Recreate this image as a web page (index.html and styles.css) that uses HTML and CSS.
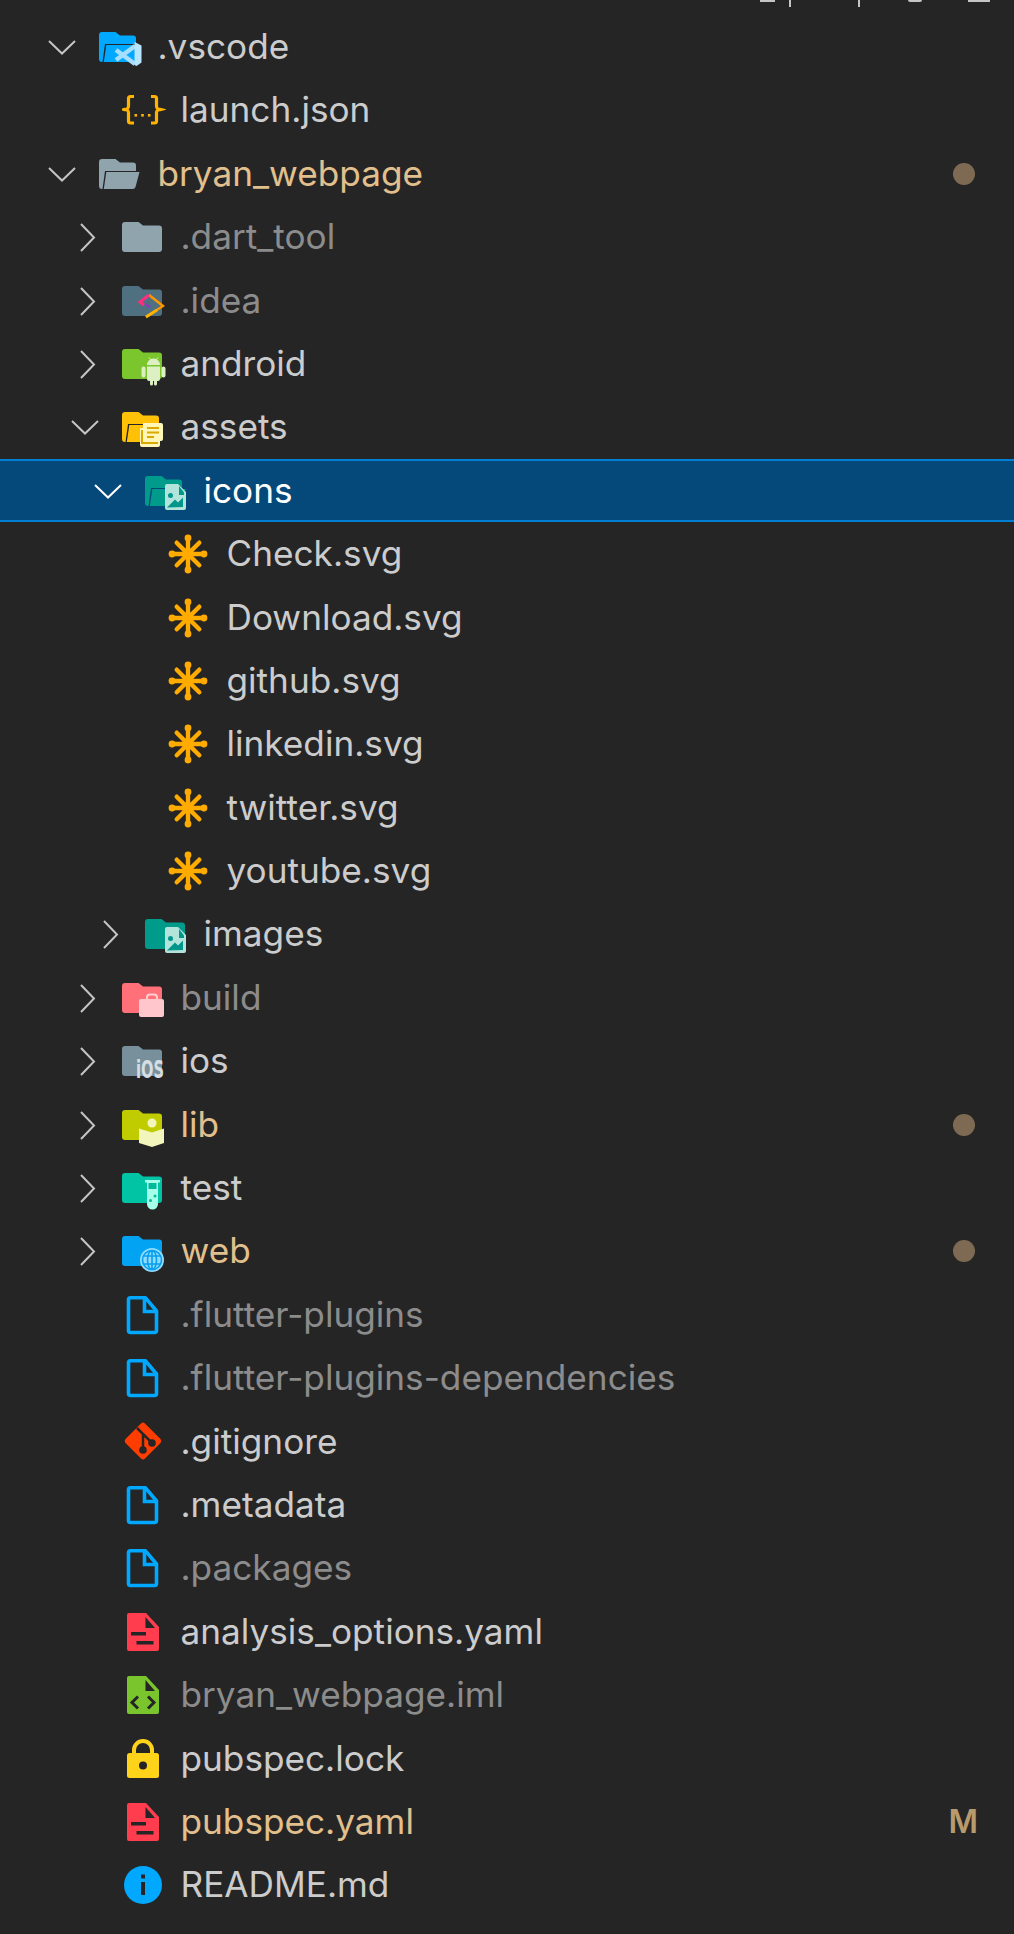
FILE: index.html
```html
<!DOCTYPE html>
<html lang="en">
<head>
<meta charset="UTF-8" />
<title>Explorer</title>
<link rel="stylesheet" href="styles.css">
</head>
<body>

<svg class="defs" width="0" height="0">
  <defs>
    <symbol id="folder" viewBox="0 0 44 44">
      <path fill="currentColor" d="M3 7h13.500l4.500 3.500h16a3 3 0 0 1 3 3V34a3 3 0 0 1-3 3H3a3 3 0 0 1-3-3V10a3 3 0 0 1 3-3z"/>
    </symbol>
    <symbol id="folder-open" viewBox="0 0 44 44">
      <path fill="currentColor" d="M3 7h13.500l4.500 3.500h13a3 3 0 0 1 3 3V19H6L3.500 37H3a3 3 0 0 1-3-3V10a3 3 0 0 1 3-3z"/>
      <path fill="currentColor" d="M7.300 20H40.500L36.500 35a3 3 0 0 1-3 2H4.800z"/>
    </symbol>
    <symbol id="chev-down" viewBox="0 0 44 44">
      <path fill="none" stroke="currentColor" stroke-width="2" d="M9 16l13 12.500L35 16"/>
    </symbol>
    <symbol id="chev-right" viewBox="0 0 44 44">
      <path fill="none" stroke="currentColor" stroke-width="2" d="M18 9l13 13.500L18 36"/>
    </symbol>
    <symbol id="ov-vscode" viewBox="0 0 44 44">
      <path fill="none" stroke="#a5dfff" stroke-width="4.500" d="M17 25l19 14M17 35l19-14"/>
      <path fill="#b9e6ff" d="M35.500 17l7 3.500v17l-5 3.500-2-1z"/>
    </symbol>
    <symbol id="ov-image" viewBox="0 0 44 44">
      <path fill="#b2e4dc" d="M22 15h11l8 8v16a2 2 0 0 1-2 2H22a2 2 0 0 1-2-2V17a2 2 0 0 1 2-2z"/>
      <path fill="#00978a" d="M34 17l5 6.500V26h-5z"/>
      <circle cx="25.500" cy="26.500" r="2.500" fill="#00978a"/>
      <path fill="#00978a" d="M22 38.500l8-8 3 3 5-5v9.500z"/>
    </symbol>
    <symbol id="ov-docs" viewBox="0 0 44 44">
      <path fill="#fff6b8" d="M21 18h18a2 2 0 0 1 2 2v14a2 2 0 0 1-2 2h-1v4a2 2 0 0 1-2 2H20a2 2 0 0 1-2-2V23h3z"/>
      <path fill="none" stroke="#d9a900" stroke-width="2" d="M25 23h12M25 27.500h12M25 32h7M20 25v13h16"/>
    </symbol>
    <symbol id="ov-android" viewBox="0 0 44 44">
      <path fill="#dcf0c4" d="M25 23a6.500 6.500 0 0 1 13 0z"/>
      <path fill="#dcf0c4" d="M25 24.500h13V37a2 2 0 0 1-2 2h-1v3a1.500 1.500 0 0 1-3 0v-3h-1v3a1.500 1.500 0 0 1-3 0v-3h-1a2 2 0 0 1-2-2z"/>
      <rect x="19.500" y="24.500" width="4" height="11" rx="2" fill="#dcf0c4"/>
      <rect x="39.500" y="24.500" width="4" height="11" rx="2" fill="#dcf0c4"/>
      <path stroke="#dcf0c4" stroke-width="1" d="M27 15.500l2 2.500M36 15.500l-2 2.500"/>
    </symbol>
    <symbol id="ov-build" viewBox="0 0 44 44">
      <path fill="none" stroke="#ffcdd2" stroke-width="2" d="M25 24v-2.500a3 3 0 0 1 3-3h4a3 3 0 0 1 3 3V24"/>
      <rect x="17" y="23" width="25" height="18" rx="2" fill="#ffc6cc"/>
    </symbol>
    <symbol id="ov-ios" viewBox="0 0 44 44">
      <text x="14" y="38.600" class="ios-mark" textLength="28" lengthAdjust="spacingAndGlyphs">iOS</text>
    </symbol>
    <symbol id="ov-lib" viewBox="0 0 44 44">
      <circle cx="30" cy="20" r="4.500" fill="#f2f6bd"/>
      <path fill="#f2f6bd" d="M17 25.500l13 4 12-4V40l-12 4-13-4z"/>
    </symbol>
    <symbol id="ov-test" viewBox="0 0 44 44">
      <path fill="#a6ffe9" d="M23 14h15v2.500h-2V38a5.500 5.500 0 0 1-11 0V16.500h-2z"/>
      <rect x="26.500" y="17" width="8" height="6" fill="#00b89a"/>
      <circle cx="33" cy="30" r="1.500" fill="#00b89a"/>
      <circle cx="28.500" cy="34.500" r="1.500" fill="#00b89a"/>
    </symbol>
    <symbol id="ov-web" viewBox="0 0 44 44">
      <circle cx="30" cy="31" r="12" fill="#8fdcff"/>
      <g fill="none" stroke="#069fee" stroke-width="1.600">
        <circle cx="30" cy="31" r="9.500"/>
        <ellipse cx="30" cy="31" rx="4.500" ry="9.500"/>
        <path d="M21 27h18M21 35h18M30 21v20"/>
      </g>
    </symbol>
    <symbol id="ov-idea" viewBox="0 0 44 44">
      <path fill="none" stroke="#ff9800" stroke-width="2.400" d="M27 16l14 11-17 11"/>
      <path fill="none" stroke="#ff2f7e" stroke-width="3" d="M27 16l-9 7 4 3"/>
      <path fill="#8e35c9" d="M22 24l7 3-3 2z"/>
      <path fill="none" stroke="#ffb300" stroke-width="2.800" d="M35 31l-11 7"/>
    </symbol>
    <symbol id="file" viewBox="0 0 44 44">
      <path fill="none" stroke="currentColor" stroke-width="3.600" stroke-linejoin="round" d="M8.500 4.800h15L34.500 18V37.500a2 2 0 0 1-2 2h-24a2 2 0 0 1-2-2V6.800a2 2 0 0 1 2-2z"/>
      <path fill="none" stroke="currentColor" stroke-width="3.600" d="M22.500 4v14.500H35"/>
    </symbol>
    <symbol id="file-yaml" viewBox="0 0 44 44">
      <path fill="#ff3d4f" d="M7 3h17l13 14v22a2 2 0 0 1-2 2H7a2 2 0 0 1-2-2V5a2 2 0 0 1 2-2z"/>
      <path fill="#252526" d="M23.500 7l9.500 11h-9.500z"/>
      <rect x="9" y="22" width="15" height="3.500" fill="#252526"/>
      <rect x="14.500" y="31" width="17" height="3.500" fill="#252526"/>
    </symbol>
    <symbol id="file-code" viewBox="0 0 44 44">
      <path fill="#7ac52d" d="M7 3h17l13 14v22a2 2 0 0 1-2 2H7a2 2 0 0 1-2-2V5a2 2 0 0 1 2-2z"/>
      <path fill="#252526" d="M23.500 7l9.500 11h-9.500z"/>
      <path fill="none" stroke="#252526" stroke-width="3" d="M16 23.500l-6 6 6 6M26 23.500l6 6-6 6"/>
    </symbol>
    <symbol id="lock" viewBox="0 0 44 44">
      <path fill="none" stroke="#ffd31a" stroke-width="4" d="M12 18v-5a9 9 0 0 1 18 0v5"/>
      <rect x="5" y="16" width="32" height="25" rx="2.500" fill="#ffd31a"/>
      <circle cx="21" cy="28.500" r="4" fill="#252526"/>
    </symbol>
    <symbol id="info" viewBox="0 0 44 44">
      <circle cx="21" cy="22" r="19" fill="#00a8ff"/>
      <rect x="19" y="11.500" width="4" height="4" fill="#252526"/>
      <rect x="19" y="19" width="4" height="13" fill="#252526"/>
    </symbol>
    <symbol id="git" viewBox="0 0 44 44">
      <path fill="#ff3d00" d="M19 3.500a3 3 0 0 1 4 0l15.500 15.500a3 3 0 0 1 0 4L23 38.500a3 3 0 0 1-4 0L3.500 23a3 3 0 0 1 0-4z"/>
      <g fill="none" stroke="#252526" stroke-width="2.500">
        <path d="M15 8l6 6v13M21 14l8.500 8.500"/>
      </g>
      <circle cx="21" cy="30" r="3.800" fill="#252526"/>
      <circle cx="30" cy="23" r="3.800" fill="#252526"/>
    </symbol>
    <symbol id="star" viewBox="0 0 44 44">
      <g stroke="#ffab00" stroke-width="4.400" stroke-linecap="round">
        <path d="M20 6v32M4 22h32M8.700 10.700l22.600 22.600M8.700 33.300l22.600-22.600"/>
      </g>
      <circle cx="20" cy="6" r="3.400" fill="#ffab00"/>
      <circle cx="20" cy="38" r="3.400" fill="#ffab00"/>
      <circle cx="4" cy="22" r="3.400" fill="#ffab00"/>
      <circle cx="36" cy="22" r="3.400" fill="#ffab00"/>
    </symbol>
    <symbol id="json" viewBox="0 0 44 44">
      <g fill="none" stroke="#ffb300" stroke-width="3.200">
        <path d="M12 8.500H8.500a2 2 0 0 0-2 2V18a3.500 3.500 0 0 1-4.500 3.500A3.500 3.500 0 0 1 6.500 25v8a2 2 0 0 0 2 2H12"/>
        <path d="M29 8.500h3.500a2 2 0 0 1 2 2V18a3.500 3.500 0 0 0 4.500 3.500A3.500 3.500 0 0 0 34.500 25v8a2 2 0 0 1-2 2H29"/>
      </g>
      <g fill="#ffb300">
        <rect x="12.500" y="26" width="2.600" height="2.600"/>
        <rect x="19.200" y="26" width="2.600" height="2.600"/>
        <rect x="25.900" y="26" width="2.600" height="2.600"/>
      </g>
    </symbol>
  </defs>
</svg>

<div class="toolbar">
  <span class="tool-a"></span>
  <span class="tool-line"></span>
  <span class="tool-line tool-line-b"></span>
  <span class="tool-c"></span>
  <span class="tool-d"></span>
</div>

<div class="tree">
  <div class="row l0">
    <svg class="twistie"><use href="#chev-down"/></svg>
    <svg class="icon c-vscode"><use href="#folder-open"/><use href="#ov-vscode"/></svg>
    <span class="name">.vscode</span>
  </div>
  <div class="row l1">
    <span class="twistie"></span>
    <svg class="icon"><use href="#json"/></svg>
    <span class="name">launch.json</span>
  </div>
  <div class="row l0 modified">
    <svg class="twistie"><use href="#chev-down"/></svg>
    <svg class="icon c-grey"><use href="#folder-open"/></svg>
    <span class="name">bryan_webpage</span>
    <span class="dot"></span>
  </div>
  <div class="row l1 ignored">
    <svg class="twistie"><use href="#chev-right"/></svg>
    <svg class="icon c-grey"><use href="#folder"/></svg>
    <span class="name">.dart_tool</span>
  </div>
  <div class="row l1 ignored">
    <svg class="twistie"><use href="#chev-right"/></svg>
    <svg class="icon c-idea"><use href="#folder"/><use href="#ov-idea"/></svg>
    <span class="name">.idea</span>
  </div>
  <div class="row l1">
    <svg class="twistie"><use href="#chev-right"/></svg>
    <svg class="icon c-android"><use href="#folder"/><use href="#ov-android"/></svg>
    <span class="name">android</span>
  </div>
  <div class="row l1">
    <svg class="twistie"><use href="#chev-down"/></svg>
    <svg class="icon c-assets"><use href="#folder-open"/><use href="#ov-docs"/></svg>
    <span class="name">assets</span>
  </div>
  <div class="row l2 selected">
    <svg class="twistie"><use href="#chev-down"/></svg>
    <svg class="icon c-images"><use href="#folder-open"/><use href="#ov-image"/></svg>
    <span class="name">icons</span>
  </div>
  <div class="row l3">
    <span class="twistie"></span>
    <svg class="icon"><use href="#star"/></svg>
    <span class="name">Check.svg</span>
  </div>
  <div class="row l3">
    <span class="twistie"></span>
    <svg class="icon"><use href="#star"/></svg>
    <span class="name">Download.svg</span>
  </div>
  <div class="row l3">
    <span class="twistie"></span>
    <svg class="icon"><use href="#star"/></svg>
    <span class="name">github.svg</span>
  </div>
  <div class="row l3">
    <span class="twistie"></span>
    <svg class="icon"><use href="#star"/></svg>
    <span class="name">linkedin.svg</span>
  </div>
  <div class="row l3">
    <span class="twistie"></span>
    <svg class="icon"><use href="#star"/></svg>
    <span class="name">twitter.svg</span>
  </div>
  <div class="row l3">
    <span class="twistie"></span>
    <svg class="icon"><use href="#star"/></svg>
    <span class="name">youtube.svg</span>
  </div>
  <div class="row l2">
    <svg class="twistie"><use href="#chev-right"/></svg>
    <svg class="icon c-images"><use href="#folder"/><use href="#ov-image"/></svg>
    <span class="name">images</span>
  </div>
  <div class="row l1 ignored">
    <svg class="twistie"><use href="#chev-right"/></svg>
    <svg class="icon c-build"><use href="#folder"/><use href="#ov-build"/></svg>
    <span class="name">build</span>
  </div>
  <div class="row l1">
    <svg class="twistie"><use href="#chev-right"/></svg>
    <svg class="icon c-ios"><use href="#folder"/><use href="#ov-ios"/></svg>
    <span class="name">ios</span>
  </div>
  <div class="row l1 modified">
    <svg class="twistie"><use href="#chev-right"/></svg>
    <svg class="icon c-lib"><use href="#folder"/><use href="#ov-lib"/></svg>
    <span class="name">lib</span>
    <span class="dot"></span>
  </div>
  <div class="row l1">
    <svg class="twistie"><use href="#chev-right"/></svg>
    <svg class="icon c-test"><use href="#folder"/><use href="#ov-test"/></svg>
    <span class="name">test</span>
  </div>
  <div class="row l1 modified">
    <svg class="twistie"><use href="#chev-right"/></svg>
    <svg class="icon c-web"><use href="#folder"/><use href="#ov-web"/></svg>
    <span class="name">web</span>
    <span class="dot"></span>
  </div>
  <div class="row l1 ignored">
    <span class="twistie"></span>
    <svg class="icon c-file"><use href="#file"/></svg>
    <span class="name">.flutter-plugins</span>
  </div>
  <div class="row l1 ignored">
    <span class="twistie"></span>
    <svg class="icon c-file"><use href="#file"/></svg>
    <span class="name">.flutter-plugins-dependencies</span>
  </div>
  <div class="row l1">
    <span class="twistie"></span>
    <svg class="icon"><use href="#git"/></svg>
    <span class="name">.gitignore</span>
  </div>
  <div class="row l1">
    <span class="twistie"></span>
    <svg class="icon c-file"><use href="#file"/></svg>
    <span class="name">.metadata</span>
  </div>
  <div class="row l1 ignored">
    <span class="twistie"></span>
    <svg class="icon c-file"><use href="#file"/></svg>
    <span class="name">.packages</span>
  </div>
  <div class="row l1">
    <span class="twistie"></span>
    <svg class="icon"><use href="#file-yaml"/></svg>
    <span class="name">analysis_options.yaml</span>
  </div>
  <div class="row l1 ignored">
    <span class="twistie"></span>
    <svg class="icon"><use href="#file-code"/></svg>
    <span class="name">bryan_webpage.iml</span>
  </div>
  <div class="row l1">
    <span class="twistie"></span>
    <svg class="icon"><use href="#lock"/></svg>
    <span class="name">pubspec.lock</span>
  </div>
  <div class="row l1 modified">
    <span class="twistie"></span>
    <svg class="icon"><use href="#file-yaml"/></svg>
    <span class="name">pubspec.yaml</span>
    <span class="badge">M</span>
  </div>
  <div class="row l1">
    <span class="twistie"></span>
    <svg class="icon"><use href="#info"/></svg>
    <span class="name">README.md</span>
  </div>
</div>

</body>
</html>
```

FILE: styles.css
```css
html, body {
  margin: 0;
  padding: 0;
  height: 100%;
  background: #252526;
}
body {
  font-family: Inter, "Liberation Sans", sans-serif;
  font-size: 35.200px;
  color: #cccccc;
  overflow: hidden;
}
.defs {
  position: absolute;
}
.ios-mark {
  font-family: "DejaVu Sans", sans-serif;
  font-weight: 700;
  font-size: 24px;
  fill: #d5dee3;
}

/* cut off actions of the header above the tree */
.toolbar {
  height: 15.300px;
  position: relative;
  overflow: hidden;
}
.toolbar span {
  position: absolute;
  top: 0;
  background: #c5c5c5;
}
.tool-a { left: 760px; width: 15px; height: 2px; }
.tool-line { left: 789px; width: 2px; height: 7px; }
.tool-line-b { left: 858px; }
.tool-c { left: 908px; width: 14px; height: 2px; border-radius: 0 0 7px 7px; }
.tool-d { left: 968px; width: 22px; height: 2px; }

.row {
  height: 63.400px;
  box-sizing: border-box;
  display: flex;
  align-items: center;
  padding-right: 30px;
  white-space: nowrap;
}
.l0 { padding-left: 40px; }
.l1 { padding-left: 63px; }
.l2 { padding-left: 86px; }
.l3 { padding-left: 109px; }

.twistie {
  width: 44px;
  height: 44px;
  flex: none;
  color: #c5c5c5;
  margin-right: 14.600px;
}
.icon {
  width: 44px;
  height: 44px;
  flex: none;
  margin-right: 14.900px;
}
.name {
  flex: 1;
  line-height: 44px;
  padding-bottom: 2px;
}

.ignored .name { color: #8c8c8c; }
.modified .name { color: #e2c08d; }

.selected {
  background: #04497a;
  border-top: 2px solid #007fd4;
  border-bottom: 2px solid #007fd4;
}
.selected .name { color: #ffffff; }
.selected .twistie { color: #ffffff; }

.dot {
  width: 22px;
  height: 22px;
  border-radius: 50%;
  background: #7e6a52;
  margin-right: 9px;
}
.badge {
  color: #b89b6c;
  font-size: 32px;
  font-weight: 600;
  margin-right: 6px;
}

.c-vscode { color: #00a8ff; }
.c-grey { color: #90a4ae; }
.c-idea { color: #4f7080; }
.c-android { color: #7bc62d; }
.c-assets { color: #ffc107; }
.c-images { color: #009b8a; }
.c-build { color: #ff7078; }
.c-ios { color: #78909c; }
.c-lib { color: #c0cc00; }
.c-test { color: #00c4a4; }
.c-web { color: #03a3f4; }
.c-file { color: #00a8ff; }
```
